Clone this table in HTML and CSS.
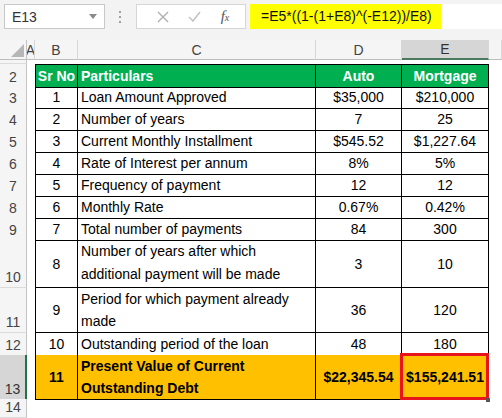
FILE: index.html
```html
<!DOCTYPE html>
<html lang="en">
<head>
  <meta charset="UTF-8">
  <title>Loan worksheet</title>
  <link rel="stylesheet" href="styles.css">
</head>
<body>
<div class="toolbar">
  <div class="name-box">
    <span>E13</span>
    <svg class="caret" width="8" height="5" viewBox="0 0 8 5"><path d="M0 0h8L4 5z" fill="#8a8a8a"/></svg>
  </div>
  <div class="grip">
    <svg width="3" height="12" viewBox="0 0 3 12"><rect x="0" y="0" width="2" height="2" fill="#a0a0a0"/><rect x="0" y="5" width="2" height="2" fill="#a0a0a0"/><rect x="0" y="10" width="2" height="2" fill="#a0a0a0"/></svg>
  </div>
  <div class="fx-buttons">
    <svg width="12" height="12" viewBox="0 0 12 12"><path d="M1 1l10 10M11 1L1 11" stroke="#b0b0b0" stroke-width="1.4" fill="none"/></svg>
    <svg width="13" height="11" viewBox="0 0 13 11"><path d="M1 6l4 4L12 1" stroke="#c4c4c4" stroke-width="1.6" fill="none"/></svg>
    <span class="fx">f<sub>x</sub></span>
  </div>
  <div class="formula">
    <span class="formula-text">=E5*((1-(1+E8)^(-E12))/E8)</span>
  </div>
</div>

<div class="sheet">
  <div class="row colheads">
    <div class="corner">
      <svg width="13" height="13" viewBox="0 0 13 13"><path d="M13 0V13H0z" fill="#b7b7b7"/></svg>
    </div>
    <div class="colhead">A</div>
    <div class="colhead">B</div>
    <div class="colhead">C</div>
    <div class="colhead">D</div>
    <div class="colhead active">E</div>
    <div class="colhead"></div>
  </div>

  <div class="row r1">
    <div class="rowhead"></div>
    <div></div><div></div><div></div><div></div><div></div><div></div>
  </div>

  <div class="row head">
    <div class="rowhead">2</div>
    <div class="gap"></div>
    <div class="cell num first">Sr No</div>
    <div class="cell text">Particulars</div>
    <div class="cell num">Auto</div>
    <div class="cell num">Mortgage</div>
    <div></div>
  </div>

  <div class="row">
    <div class="rowhead">3</div>
    <div class="gap"></div>
    <div class="cell num first">1</div>
    <div class="cell text">Loan Amount Approved</div>
    <div class="cell num">$35,000</div>
    <div class="cell num">$210,000</div>
    <div></div>
  </div>

  <div class="row">
    <div class="rowhead">4</div>
    <div class="gap"></div>
    <div class="cell num first">2</div>
    <div class="cell text">Number of years</div>
    <div class="cell num">7</div>
    <div class="cell num">25</div>
    <div></div>
  </div>

  <div class="row">
    <div class="rowhead">5</div>
    <div class="gap"></div>
    <div class="cell num first">3</div>
    <div class="cell text">Current Monthly Installment</div>
    <div class="cell num">$545.52</div>
    <div class="cell num">$1,227.64</div>
    <div></div>
  </div>

  <div class="row">
    <div class="rowhead">6</div>
    <div class="gap"></div>
    <div class="cell num first">4</div>
    <div class="cell text">Rate of Interest per annum</div>
    <div class="cell num">8%</div>
    <div class="cell num">5%</div>
    <div></div>
  </div>

  <div class="row">
    <div class="rowhead">7</div>
    <div class="gap"></div>
    <div class="cell num first">5</div>
    <div class="cell text">Frequency of payment</div>
    <div class="cell num">12</div>
    <div class="cell num">12</div>
    <div></div>
  </div>

  <div class="row">
    <div class="rowhead">8</div>
    <div class="gap"></div>
    <div class="cell num first">6</div>
    <div class="cell text">Monthly Rate</div>
    <div class="cell num">0.67%</div>
    <div class="cell num">0.42%</div>
    <div></div>
  </div>

  <div class="row">
    <div class="rowhead">9</div>
    <div class="gap"></div>
    <div class="cell num first">7</div>
    <div class="cell text">Total number of payments</div>
    <div class="cell num">84</div>
    <div class="cell num">300</div>
    <div></div>
  </div>

  <div class="row r10">
    <div class="rowhead">10</div>
    <div class="gap"></div>
    <div class="cell num first">8</div>
    <div class="cell text">Number of years after which additional payment will be made</div>
    <div class="cell num">3</div>
    <div class="cell num">10</div>
    <div></div>
  </div>

  <div class="row r11">
    <div class="rowhead">11</div>
    <div class="gap"></div>
    <div class="cell num first">9</div>
    <div class="cell text">Period for which payment already made</div>
    <div class="cell num">36</div>
    <div class="cell num">120</div>
    <div></div>
  </div>

  <div class="row">
    <div class="rowhead">12</div>
    <div class="gap"></div>
    <div class="cell num first">10</div>
    <div class="cell text">Outstanding period of the loan</div>
    <div class="cell num">48</div>
    <div class="cell num">180</div>
    <div></div>
  </div>

  <div class="row r13 total">
    <div class="rowhead active">13</div>
    <div class="gap"></div>
    <div class="cell num first">11</div>
    <div class="cell text">Present Value of Current Outstanding Debt</div>
    <div class="cell num">$22,345.54</div>
    <div class="cell num selected">$155,241.51</div>
    <div></div>
  </div>

  <div class="row r14">
    <div class="rowhead">14</div>
    <div></div><div></div><div></div><div></div><div></div><div></div>
  </div>
</div>
</body>
</html>
```

FILE: styles.css
```css
* {
  box-sizing: border-box;
}
body {
  margin: 0;
  background: #fff;
  font-family: 'Liberation Sans', Arial, sans-serif;
  font-size: 14px;
  color: #000;
  overflow: hidden;
}

/* formula bar */
.toolbar {
  display: flex;
  align-items: center;
  height: 40px;
  padding: 0 0 7px 4px;
  background: #f3f3f3;
}
.name-box {
  display: flex;
  align-items: center;
  justify-content: space-between;
  width: 101px;
  height: 25px;
  padding: 0 7px 0 7px;
  background: #fff;
  border: 1px solid #c8c8c8;
  color: #333;
}
.grip {
  width: 31px;
  display: flex;
  justify-content: center;
}
.fx-buttons {
  display: flex;
  align-items: center;
  justify-content: space-around;
  width: 110px;
  height: 25px;
  padding: 0 6px 0 10px;
  background: #fff;
  border: 1px solid #d6d6d6;
}
.fx {
  font-family: 'Liberation Serif', serif;
  font-style: italic;
  font-size: 15px;
  color: #555;
}
.fx sub {
  font-size: 10px;
  vertical-align: 0;
}
.formula {
  flex: 1;
  height: 25px;
  margin-left: 4px;
  background: #fff;
}
.formula-text {
  display: inline-block;
  height: 25px;
  line-height: 25px;
  padding: 0 9px 0 11px;
  background: #ffff00;
  color: #111;
}

/* sheet */
.row {
  display: grid;
  grid-template-columns: 27px 8px 43px 238px 86px 87px 1fr;
  height: 22px;
}
.colheads {
  height: 20px;
  background: #f5f5f5;
}
.r1 {
  height: 4px;
}
.r10 { height: 48px; }
.r11 { height: 45px; }
.r13 { height: 44px; }
.r14 { height: 19px; }

.corner {
  display: flex;
  align-items: flex-end;
  justify-content: flex-end;
  padding: 0 2px 2px 0;
  border-right: 1px solid #c4c4c4;
  border-bottom: 1px solid #bdbdbd;
}
.colhead {
  display: flex;
  align-items: center;
  justify-content: center;
  overflow: hidden;
  color: #444;
  border-right: 1px solid #d8d8d8;
  border-bottom: 1px solid #bdbdbd;
}
.colhead.active {
  background: #d6d6d6;
  border-bottom: 2px solid #4d7a5f;
  color: #333;
}
.rowhead {
  display: flex;
  align-items: flex-end;
  justify-content: center;
  padding-bottom: 2px;
  background: #f5f5f5;
  color: #444;
  border-right: 1px solid #c4c4c4;
  border-bottom: 1px solid #dcdcdc;
}
.rowhead.active {
  background: #d6d6d6;
  border-right: 2px solid #217346;
  color: #333;
}

.cell {
  display: flex;
  align-items: center;
  border-right: 1px solid #000;
  border-bottom: 1px solid #000;
  line-height: 22px;
}
.cell.first {
  border-left: 1px solid #000;
}
.cell.num {
  justify-content: center;
  text-align: center;
}
.cell.text {
  align-items: flex-end;
  padding-left: 3px;
  white-space: normal;
  line-height: 22px;
}
.r10 .cell.text {
  line-height: 23px;
  padding-bottom: 1px;
}

.head .cell {
  background: #00b050;
  color: #fff;
  font-weight: bold;
  border-top: 1px solid #000;
}

.total .cell {
  background: #ffc000;
  font-weight: bold;
}
.total .cell.text {
  line-height: 22px;
}

.selected {
  position: relative;
}
.selected::after {
  content: '';
  position: absolute;
  left: -2px;
  top: -2px;
  right: -1px;
  bottom: -1px;
  border: 3px solid #e8141c;
}
.selected::before {
  content: '';
  position: absolute;
  right: -2px;
  bottom: -3px;
  width: 4px;
  height: 4px;
  background: #555;
  z-index: 1;
}
```
